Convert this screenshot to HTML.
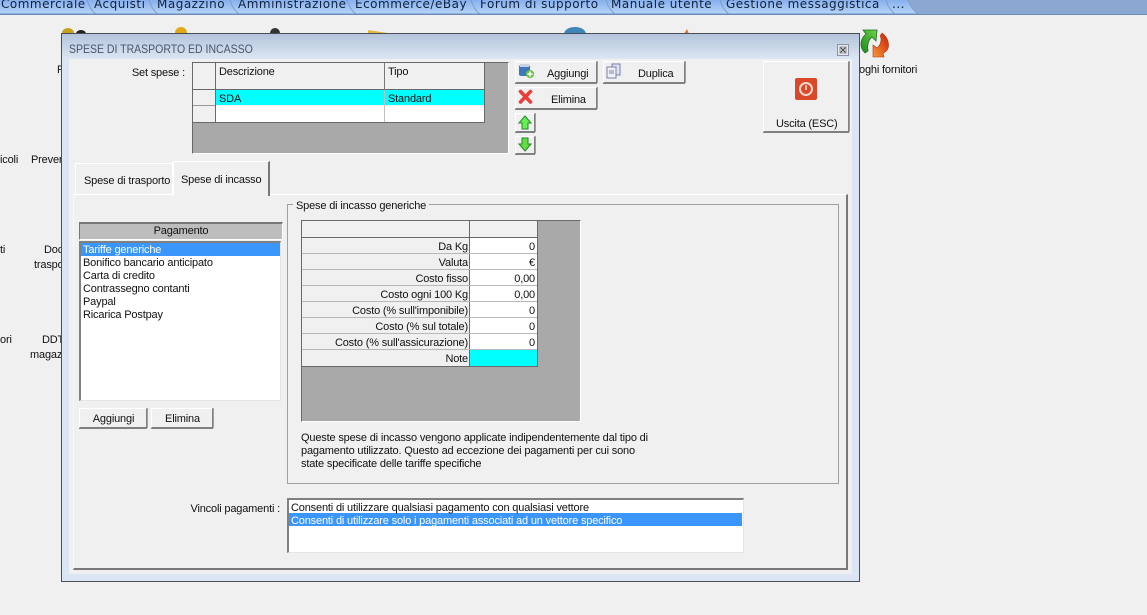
<!DOCTYPE html>
<html><head><meta charset="utf-8"><style>
html,body{margin:0;padding:0}
body{width:1147px;height:615px;overflow:hidden;background:#f0f0f0;position:relative;font-family:"Liberation Sans",sans-serif;font-size:11px;color:#111}
.a,.t{position:absolute;box-sizing:border-box}
.t{white-space:nowrap;line-height:13px;margin-top:1px;letter-spacing:-.17px}
.btn{position:absolute;box-sizing:border-box;background:#f0f0f0;border:1px solid;border-color:#fff #808080 #808080 #fff;box-shadow:0 1px 0 #808080,1px 0 0 #a0a0a0}
.tab{position:absolute;top:0;height:14px;font-family:"DejaVu Sans",sans-serif;font-size:12px;line-height:9px;color:#10213c;white-space:nowrap;letter-spacing:.5px}
.r{text-align:right}
</style></head><body>
<div class="a" style="left:0;top:0;width:1147px;height:15px;background:#8aa8d2;border-bottom:1px solid #6d8cb8"></div>
<svg class="a" style="left:0;top:0" width="925" height="15">
<defs><linearGradient id="g" x1="0" y1="0" x2="0" y2="1"><stop offset="0" stop-color="#86b0ec"/><stop offset="1" stop-color="#b8d5fa"/></linearGradient>
<linearGradient id="rd" x1="1" y1="0" x2="0" y2="1"><stop offset="0" stop-color="#c81e08"/><stop offset="1" stop-color="#f79a3a"/></linearGradient>
<linearGradient id="gr" x1="1" y1="0" x2="0" y2="1"><stop offset="0" stop-color="#6fd048"/><stop offset="1" stop-color="#1c8a1c"/></linearGradient></defs>
<path d="M0 0H908Q912 10 918 14H0Z" fill="url(#g)"/>
<path d="M87 0Q90 10 96 14M149 0Q152 10 158 14M230 0Q233 10 239 14M347 0Q350 10 356 14M471 0Q474 10 480 14M606 0Q609 10 615 14M720 0Q723 10 729 14M886 0Q889 10 895 14M908 0Q912 10 918 14" stroke="#7f9dc8" fill="none"/>
<path d="M0 14H918" stroke="#6d8cb8"/>
</svg>
<div class="tab" style="left:1px">Commerciale</div>
<div class="tab" style="left:94px">Acquisti</div>
<div class="tab" style="left:157px">Magazzino</div>
<div class="tab" style="left:238px">Amministrazione</div>
<div class="tab" style="left:355px">Ecommerce/eBay</div>
<div class="tab" style="left:480px">Forum di supporto</div>
<div class="tab" style="left:611px">Manuale utente</div>
<div class="tab" style="left:726px">Gestione messaggistica</div>
<div class="tab" style="left:892px">...</div>

<svg class="a" style="left:0;top:20px" width="900" height="15">
<ellipse cx="68" cy="13" rx="6" ry="5" fill="#c8a020"/><ellipse cx="81" cy="14" rx="5" ry="4" fill="#222"/>
<ellipse cx="181" cy="13" rx="6" ry="6" fill="#e0a818"/><ellipse cx="275" cy="13" rx="5" ry="5" fill="#333"/>
<path d="M368 13V10L388 13Z" fill="#e0b840"/><ellipse cx="575" cy="14" rx="11" ry="7" fill="#3f86b8"/><path d="M687 9L684 14H689Z" fill="#e87030"/>
</svg>
<svg class="a" style="left:858px;top:27px" width="34" height="32">
<path d="M7 26C1 20 2 12 8 7L5 3H19L18 14L14 10C10 13 9 19 10 24Z" fill="url(#gr)" stroke="#1a7018" stroke-width=".8"/>
<path d="M24 6C32 12 33 23 25 26L26 30L15 30L15 18L19 21C23 18 24 12 22 9Z" fill="url(#rd)" stroke="#b83010" stroke-width=".6"/>
</svg>
<div class="t" style="left:859px;top:63px">oghi fornitori</div>
<div class="t" style="left:57px;top:63px">F</div>
<div class="t" style="left:0;top:153px">icoli</div><div class="t" style="left:31px;top:153px">Prever</div>
<div class="t" style="left:0;top:243px">ti</div><div class="t" style="left:44px;top:243px">Doc</div><div class="t" style="left:34px;top:258px">traspo</div>
<div class="t" style="left:0;top:333px">ori</div><div class="t" style="left:42px;top:333px">DDT</div><div class="t" style="left:30px;top:348px">magaz</div>

<!-- window -->
<div class="a" style="left:61px;top:33px;width:799px;height:549px;background:#dbe5f3;border:1px solid #4a4f57">
<div class="a" style="left:0;top:0;width:797px;height:25px;background:linear-gradient(#b3c4da,#dce6f3)"></div>
</div>
<div class="t" style="left:69px;top:42px;font-size:12px;color:#46566a;letter-spacing:0;transform:scaleX(.875);transform-origin:0 0">SPESE DI TRASPORTO ED INCASSO</div>
<div class="a" style="left:837px;top:44px;width:12px;height:12px;background:#e4e9f0;border:1px solid #8a94a4"></div>
<svg class="a" style="left:837px;top:44px" width="12" height="12"><rect x="3" y="3" width="6" height="6" fill="none" stroke="#999"/><path d="M3.5 3.5L8.5 8.5M8.5 3.5L3.5 8.5" stroke="#444" stroke-width="1.1"/></svg>
<!-- panel -->
<div class="a" style="left:69px;top:59px;width:783px;height:515px;background:#f0f0f0"></div>
<div class="a" style="left:73px;top:194px;width:775px;height:376px;border-top:1px solid #fff;border-left:1px solid #f8f8f8;border-right:2px solid #787878;border-bottom:2px solid #787878"></div>

<div class="t r" style="left:100px;top:66px;width:85px">Set spese :</div>
<!-- grid -->
<div class="a" style="left:192px;top:62px;width:317px;height:92px;background:#a9a9a9;border-left:1px solid #696969;border-top:1px solid #696969;border-right:1px solid #fff;border-bottom:1px solid #fff"></div>
<div class="a" style="left:193px;top:63px;width:292px;height:59px;background:#f0f0f0;border-right:1px solid #696969"></div>
<div class="a" style="left:193px;top:89px;width:291px;height:1px;background:#696969"></div>
<div class="a" style="left:216px;top:90px;width:268px;height:15px;background:#00ffff"></div>
<div class="a" style="left:216px;top:106px;width:268px;height:16px;background:#fff"></div>
<div class="a" style="left:193px;top:105px;width:23px;height:1px;background:#999"></div>
<div class="a" style="left:193px;top:122px;width:292px;height:1px;background:#696969"></div>
<div class="a" style="left:215px;top:63px;width:1px;height:59px;background:#696969"></div>
<div class="a" style="left:384px;top:63px;width:1px;height:26px;background:#787878"></div>
<div class="a" style="left:384px;top:90px;width:1px;height:32px;background:#c0c0c0"></div>
<div class="t" style="left:219px;top:65px">Descrizione</div><div class="t" style="left:388px;top:65px">Tipo</div>
<div class="t" style="left:219px;top:92px">SDA</div><div class="t" style="left:388px;top:92px">Standard</div>

<!-- right buttons -->
<div class="btn" style="left:515px;top:61px;width:82px;height:22px"></div>
<div class="t" style="left:547px;top:67px">Aggiungi</div>
<svg class="a" style="left:518px;top:63px" width="18" height="16"><rect x="1" y="2" width="11" height="11" rx="2" fill="#3d78b8"/><rect x="2" y="1" width="9" height="3" fill="#c8d4e4"/><circle cx="12" cy="11" r="4" fill="#6cc04a"/><path d="M12 8.5V13.5M9.5 11H14.5" stroke="#fff" stroke-width="1.5"/></svg>
<div class="btn" style="left:603px;top:61px;width:82px;height:22px"></div>
<div class="t" style="left:638px;top:67px">Duplica</div>
<svg class="a" style="left:606px;top:63px" width="16" height="16"><rect x="6" y="1" width="8" height="11" fill="#dfe3f2" stroke="#7a7fa8"/><rect x="1" y="4" width="9" height="11" fill="#eef0f8" stroke="#7a7fa8"/><path d="M3 8H8M3 10H8" stroke="#7a7fa8"/></svg>
<div class="btn" style="left:515px;top:87px;width:82px;height:22px"></div>
<div class="t" style="left:551px;top:93px">Elimina</div>
<svg class="a" style="left:518px;top:89px" width="16" height="16"><path d="M2.5 2.5L12.5 13M12.5 2.5L2.5 13" stroke="#e8403a" stroke-width="3.6" stroke-linecap="round"/></svg>
<div class="btn" style="left:515px;top:113px;width:20px;height:19px"></div>
<svg class="a" style="left:518px;top:115px" width="14" height="15"><path d="M7 1L13 8H10V14H4V8H1Z" fill="#66ee55" stroke="#228822"/></svg>
<div class="btn" style="left:515px;top:136px;width:20px;height:18px"></div>
<svg class="a" style="left:518px;top:137px" width="14" height="15"><path d="M7 14L13 7H10V1H4V7H1Z" fill="#66dd44" stroke="#228822"/></svg>
<div class="btn" style="left:763px;top:61px;width:86px;height:71px"></div>
<div class="a" style="left:795px;top:78px;width:22px;height:22px;background:#d9482a;border-radius:2px"></div>
<svg class="a" style="left:795px;top:78px" width="22" height="22"><circle cx="11" cy="11" r="6" fill="none" stroke="#f4d8c8" stroke-width="2"/><path d="M11 7V12" stroke="#f4d8c8" stroke-width="1.6"/></svg>
<div class="t" style="left:776px;top:117px">Uscita (ESC)</div>

<!-- tabs -->
<div class="a" style="left:75px;top:163px;width:98px;height:32px;border:1px solid #fff;border-bottom:0"></div>
<div class="a" style="left:173px;top:161px;width:97px;height:35px;background:#f0f0f0;border-top:1px solid #fff;border-left:1px solid #fff;border-right:2px solid #787878"></div>
<div class="t" style="left:84px;top:174px">Spese di trasporto</div>
<div class="t" style="left:181px;top:173px">Spese di incasso</div>

<!-- pagamento -->
<div class="a" style="left:79px;top:222px;width:204px;height:18px;background:#bdbdbd;border-left:1px solid #777;border-top:2px solid #777;border-right:1px solid #fff;border-bottom:1px solid #fff"></div>
<div class="t" style="left:79px;top:224px;width:204px;text-align:center">Pagamento</div>
<div class="a" style="left:79px;top:241px;width:202px;height:160px;background:#fff;border-left:2px solid #808080;border-top:2px solid #808080;border-right:1px solid #e4e4e4;border-bottom:1px solid #e4e4e4"></div>
<div class="a" style="left:81px;top:243px;width:199px;height:13px;background:#3a96fb"></div>
<div class="t" style="left:83px;top:243px;color:#fff">Tariffe generiche</div>
<div class="t" style="left:83px;top:256px">Bonifico bancario anticipato</div>
<div class="t" style="left:83px;top:269px">Carta di credito</div>
<div class="t" style="left:83px;top:282px">Contrassegno contanti</div>
<div class="t" style="left:83px;top:295px">Paypal</div>
<div class="t" style="left:83px;top:308px">Ricarica Postpay</div>
<div class="btn" style="left:79px;top:408px;width:68px;height:20px"></div>
<div class="t" style="left:79px;top:412px;width:69px;text-align:center">Aggiungi</div>
<div class="btn" style="left:151px;top:408px;width:62px;height:20px"></div>
<div class="t" style="left:151px;top:412px;width:63px;text-align:center">Elimina</div>

<!-- group -->
<div class="a" style="left:287px;top:204px;width:552px;height:280px;border:1px solid #a0a0a0"></div>
<div class="t" style="left:293px;top:199px;background:#f0f0f0;padding:0 3px">Spese di incasso generiche</div>
<div class="a" style="left:301px;top:220px;width:280px;height:202px;background:#a9a9a9;border-left:1px solid #696969;border-top:1px solid #696969;border-right:1px solid #fff;border-bottom:1px solid #fff"></div>
<div class="a" style="left:302px;top:221px;width:236px;height:146px;background:#f0f0f0;border-right:1px solid #696969;border-bottom:1px solid #696969"></div>
<div class="a" style="left:470px;top:238px;width:67px;height:112px;background:#fff"></div>
<div class="a" style="left:470px;top:350px;width:67px;height:16px;background:#00ffff"></div>
<div class="a" style="left:469px;top:221px;width:1px;height:145px;background:#696969"></div>
<div class="a" style="left:302px;top:237px;width:235px;height:1px;background:#696969"></div>
<div class="a" style="left:302px;top:253px;width:235px;height:1px;background:#b8b8b8"></div>
<div class="a" style="left:302px;top:269px;width:235px;height:1px;background:#b8b8b8"></div>
<div class="a" style="left:302px;top:285px;width:235px;height:1px;background:#b8b8b8"></div>
<div class="a" style="left:302px;top:301px;width:235px;height:1px;background:#b8b8b8"></div>
<div class="a" style="left:302px;top:317px;width:235px;height:1px;background:#b8b8b8"></div>
<div class="a" style="left:302px;top:333px;width:235px;height:1px;background:#b8b8b8"></div>
<div class="a" style="left:302px;top:349px;width:235px;height:1px;background:#b8b8b8"></div>
<div class="t r" style="left:303px;top:240px;width:165px">Da Kg</div><div class="t r" style="left:470px;top:240px;width:65px">0</div>
<div class="t r" style="left:303px;top:256px;width:165px">Valuta</div><div class="t r" style="left:470px;top:256px;width:65px">€</div>
<div class="t r" style="left:303px;top:272px;width:165px">Costo fisso</div><div class="t r" style="left:470px;top:272px;width:65px">0,00</div>
<div class="t r" style="left:303px;top:288px;width:165px">Costo ogni 100 Kg</div><div class="t r" style="left:470px;top:288px;width:65px">0,00</div>
<div class="t r" style="left:303px;top:304px;width:165px">Costo (% sull'imponibile)</div><div class="t r" style="left:470px;top:304px;width:65px">0</div>
<div class="t r" style="left:303px;top:320px;width:165px">Costo (% sul totale)</div><div class="t r" style="left:470px;top:320px;width:65px">0</div>
<div class="t r" style="left:303px;top:336px;width:165px">Costo (% sull'assicurazione)</div><div class="t r" style="left:470px;top:336px;width:65px">0</div>
<div class="t r" style="left:303px;top:352px;width:165px">Note</div>
<div class="t" style="left:301px;top:431px">Queste spese di incasso vengono applicate indipendentemente dal tipo di</div>
<div class="t" style="left:301px;top:444px">pagamento utilizzato. Questo ad eccezione dei pagamenti per cui sono</div>
<div class="t" style="left:301px;top:457px">state specificate delle tariffe specifiche</div>

<!-- vincoli -->
<div class="t r" style="left:150px;top:502px;width:130px">Vincoli pagamenti :</div>
<div class="a" style="left:287px;top:498px;width:457px;height:55px;background:#fff;border-left:2px solid #808080;border-top:2px solid #808080;border-right:1px solid #e4e4e4;border-bottom:1px solid #e4e4e4"></div>
<div class="a" style="left:289px;top:513px;width:453px;height:13px;background:#3a96fb"></div>
<div class="t" style="left:291px;top:501px">Consenti di utilizzare qualsiasi pagamento con qualsiasi vettore</div>
<div class="t" style="left:291px;top:514px;color:#fff">Consenti di utilizzare solo i pagamenti associati ad un vettore specifico</div>
</body></html>
